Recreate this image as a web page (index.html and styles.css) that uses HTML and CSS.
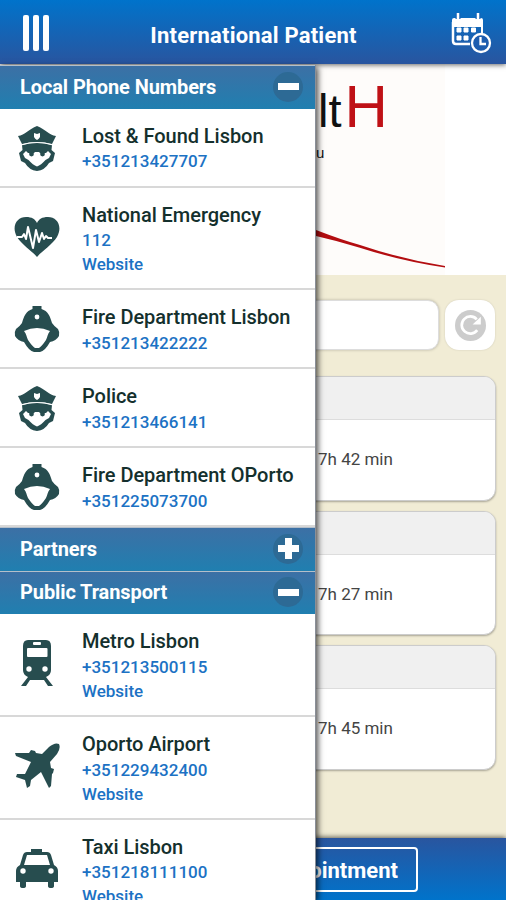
FILE: index.html
```html
<!DOCTYPE html>
<html lang="en">
<head>
    <meta charset="UTF-8">
    <meta name="viewport" content="width=device-width, initial-scale=1.0">
    <title>International Patient</title>
    <link rel="stylesheet" href="styles.css">
</head>
<body>
    <svg class="sprite" width="0" height="0">
        <symbol id="police" viewBox="0 0 46 46">
            <path d="M4 11 C11 10 15 4 23 1 C31 4 35 10 42 11 L38 19 Q23 15 8 19 Z"/>
            <path d="M8 20 Q23 15 38 20 L37.500 25 L41 28 L39 36 L35 38 Q31 45 23 46 Q15 45 11 38 L7 36 L5 28 L8.500 25 Z"/>
            <path class="cut" d="M20 8 L23 9 L26 8 V12 Q25 14 23 15 Q21 14 20 12 Z"/>
            <path class="cut" d="M9 29 L12 26 L14 28 H20 L21 27 H25 L26 28 H32 L34 26 L37 29 L35 33 L31.500 35 Q27 40 23 41.500 Q19 40 14.500 35 L11 33 Z"/>
            <path class="thin" d="M7 20 Q23 15 39 20"/>
            <circle cx="17.500" cy="29" r="2.400"/>
            <circle cx="28.500" cy="29" r="2.400"/>
        </symbol>
        <symbol id="heart" viewBox="0 0 46 46">
            <path d="M23 43 C18 37 8 31 3 23 C-3 12 3 3 12 3 C18 3 21 5 23 9 C25 5 28 3 34 3 C43 3 49 12 43 23 C38 31 28 37 23 43 Z"/>
            <path class="pulse" d="M3 23 H8 L10 20 L12 25 L14 13 L19 34 L22 16 L25 28 L28 19 L30 25 L32 22 L34 24 H38"/>
        </symbol>
        <symbol id="fire" viewBox="0 0 46 46">
            <path d="M18.500 3 V0 H27.500 V3 C34 5 36 10 38 17 Q40 20 44 23 Q46 26 45 30 Q42 35 36 36 Q31 45 26 46 H20 Q15 45 10 36 Q4 35 1 30 Q0 26 2 23 Q6 20 8 17 C10 10 12 5 18.500 3 Z"/>
            <path class="cut" d="M10 25 Q23 19 36 25 C33.500 28 33.500 31 32 34 Q28 40 25 42 H21 Q18 40 14 34 C12.500 31 12.500 28 10 25 Z"/>
            <circle class="cut" cx="23" cy="11" r="2.400"/>
        </symbol>
        <symbol id="train" viewBox="0 0 46 46">
            <path d="M14 0 H32 Q37 0 37 6 V30 Q37 35 32 37 L39 46 H34 L30 40 H16 L12 46 H7 L14 37 Q9 35 9 30 V6 Q9 0 14 0 Z"/>
            <rect class="cut" x="19" y="2" width="8" height="3" rx="1"/>
            <rect class="cut" x="13" y="8" width="20.500" height="9" rx="1"/>
            <circle class="cut" cx="15" cy="29" r="2.700"/>
            <circle class="cut" cx="31" cy="29" r="2.700"/>
        </symbol>
        <symbol id="plane" viewBox="0 0 46 46">
            <path d="M45 1 Q47 5 43 11 L36 19 L37 25 L40 26 L39 30 L38 31 L37 43 L35 45 L27 29 L17 37 L16 43 L13 45 L11 37 L2 34 L3 31 L11 31 L17 19 L2 13 L1 10 L15 10 L17 7 L21 8 L22 10 L28 11 L35 4 Q41 -1 45 1 Z"/>
        </symbol>
        <symbol id="taxi" viewBox="0 0 46 46">
            <path d="M17 6 V3 H28 V6 H33 Q36 6 37 9 L40 19 Q44 21 44 25 V36 H40 V40 Q40 42 37 42 Q34 42 34 40 V36 H12 V40 Q12 42 9 42 Q6 42 6 40 V36 H2 V25 Q2 21 6 19 L9 9 Q10 6 13 6 Z"/>
            <path class="cut" d="M13 9 H33 L36 19 H10 Z"/>
            <circle class="cut" cx="9" cy="25" r="2.700"/>
            <circle class="cut" cx="37" cy="25" r="2.700"/>
        </symbol>
    </svg>

    <div class="app">
        <header class="topbar">
            <div class="burger"><span></span><span></span><span></span></div>
            <h1>International Patient</h1>
            <svg class="calendar" viewBox="0 0 42 42">
                <path d="M3 9 V28 Q3 31 6 31 H20" fill="none" stroke="#fff" stroke-width="2.500"/>
                <path d="M2 14 V7 Q2 5 4 5 H31 Q33 5 33 7 V14 Z" fill="#fff"/>
                <path d="M8 0 V6 M28 0 V6" stroke="#1465b8" stroke-width="5"/>
                <path d="M8 0 V6 M28 0 V6" stroke="#fff" stroke-width="2.500"/>
                <path d="M32 14 V22" stroke="#fff" stroke-width="2"/>
                <path d="M7 15h4v4h-4z M14 15h4v4h-4z M21.500 15h4v4h-4z M7 23h4v4h-4z M14 23h4v4h-4z" fill="#fff" stroke="#fff"/>
                <circle cx="31" cy="30" r="9" fill="#1d5daf" stroke="#fff" stroke-width="2.300"/>
                <path d="M30.500 24 V31 H36" fill="none" stroke="#fff" stroke-width="2.300"/>
            </svg>
        </header>

        <main class="page">
            <div class="banner">
                <div class="logo">
                    <div class="logo-name">lt<b>H</b></div>
                    <div class="logo-sub">u</div>
                    <svg class="swoosh" viewBox="0 0 132 40">
                        <path d="M0 1 Q26 11 44 16 Q85 30 129 37 V38.500 Q85 32 43 18.500 Q22 12 0 7 Z"/>
                    </svg>
                </div>
            </div>
            <div class="search">
                <div class="search-box"></div>
                <button class="refresh">
                    <svg viewBox="0 0 30 30">
                        <circle cx="15" cy="15" r="15" fill="#ccc"/>
                        <path d="M21.500 19.500 A8.300 8.300 0 1 1 21 9" fill="none" stroke="#fff" stroke-width="2.600"/>
                        <path d="M25 6.500 V14 H17 Z" fill="#fff"/>
                    </svg>
                </button>
            </div>
            <div class="cards">
                <div class="card"><div class="card-head"></div><div class="card-body">7h 42 min</div></div>
                <div class="card"><div class="card-head"></div><div class="card-body">7h 27 min</div></div>
                <div class="card"><div class="card-head"></div><div class="card-body">7h 45 min</div></div>
            </div>
        </main>

        <footer class="bottombar">
            <button class="appointment">Appointment</button>
        </footer>

        <nav class="drawer">
            <h2>Local Phone Numbers <span class="toggle"></span></h2>
            <div class="item">
                <svg class="icon"><use href="#police"/></svg>
                <div><h3>Lost &amp; Found Lisbon</h3><a>+351213427707</a></div>
            </div>
            <div class="item tall">
                <svg class="icon"><use href="#heart"/></svg>
                <div><h3>National Emergency</h3><a>112</a><a>Website</a></div>
            </div>
            <div class="item">
                <svg class="icon"><use href="#fire"/></svg>
                <div><h3>Fire Department Lisbon</h3><a>+351213422222</a></div>
            </div>
            <div class="item">
                <svg class="icon"><use href="#police"/></svg>
                <div><h3>Police</h3><a>+351213466141</a></div>
            </div>
            <div class="item">
                <svg class="icon"><use href="#fire"/></svg>
                <div><h3>Fire Department OPorto</h3><a>+351225073700</a></div>
            </div>
            <h2>Partners <span class="toggle plus"></span></h2>
            <h2>Public Transport <span class="toggle"></span></h2>
            <div class="item tall">
                <svg class="icon"><use href="#train"/></svg>
                <div><h3>Metro Lisbon</h3><a>+351213500115</a><a>Website</a></div>
            </div>
            <div class="item tall">
                <svg class="icon"><use href="#plane"/></svg>
                <div><h3>Oporto Airport</h3><a>+351229432400</a><a>Website</a></div>
            </div>
            <div class="item tall">
                <svg class="icon"><use href="#taxi"/></svg>
                <div><h3>Taxi Lisbon</h3><a>+351218111100</a><a>Website</a></div>
            </div>
        </nav>
    </div>
</body>
</html>
```
FILE: styles.css
```css
:root {
    --blue-light: #0073cb;
    --blue-dark: #29559f;
    --icon: #274d4f;
    --link: #1c72c4;
    --sand: #f1ecd5;
}

* {
    box-sizing: border-box;
}

body {
    margin: 0;
    font-family: Roboto, sans-serif;
}

h1, h2, h3 {
    margin: 0;
}

.sprite {
    position: absolute;
}

.app {
    position: relative;
    display: flex;
    flex-direction: column;
    width: 506px;
    height: 900px;
    overflow: hidden;
    background: var(--sand);
}

/* Top bar */
.topbar {
    z-index: 1;
    flex: none;
    display: grid;
    grid-template-columns: 60px 1fr 60px;
    align-items: center;
    height: 64px;
    background: linear-gradient(var(--blue-light), var(--blue-dark));
    box-shadow: 0 1px 5px rgba(0, 0, 0, 0.6);
}

.topbar h1 {
    padding: 7px 0 0 1px;
    color: #fff;
    font-size: 22px;
    line-height: 26px;
    font-weight: 700;
    letter-spacing: 0.2px;
    text-align: center;
}

.burger {
    display: flex;
    gap: 4px;
    padding: 2px 0 0 23px;
}

.burger span {
    width: 6px;
    height: 36px;
    border-radius: 2px;
    background: #fff;
}

.calendar {
    width: 42px;
    height: 42px;
    margin: 4px 0 0 4px;
}

/* Page under the drawer */
.page {
    flex: 1;
    display: flex;
    flex-direction: column;
}

.banner {
    height: 211px;
    background: #fff;
}

.logo {
    width: 445px;
    height: 211px;
    padding-left: 316px;
    background: #fefcfa;
    font-family: "Liberation Sans", sans-serif;
    color: #111;
}

.logo-name {
    padding: 9px 0 0 2px;
    font-size: 47px;
    line-height: 68px;
    white-space: nowrap;
}

.logo-name b {
    margin-left: 3px;
    color: #bf1116;
    font-size: 60px;
    font-weight: 400;
}

.logo-sub {
    font-size: 15px;
    line-height: 16px;
}

.swoosh {
    display: block;
    width: 132px;
    height: 40px;
    margin-top: 68px;
    fill: #b30d10;
}

.search {
    display: flex;
    gap: 6px;
    padding: 25px 11px 0 12px;
}

.search-box {
    flex: 1;
    height: 50px;
    border: 1px solid #ddd;
    border-radius: 11px;
    background: #fff;
    box-shadow: 0 0 3px rgba(0, 0, 0, 0.25);
}

.refresh {
    display: flex;
    justify-content: center;
    align-items: center;
    width: 50px;
    height: 50px;
    padding: 0;
    border: none;
    border-radius: 14px;
    background: #fff;
    box-shadow: 0 0 2px rgba(0, 0, 0, 0.15);
}

.refresh svg {
    width: 31px;
    height: 31px;
}

.cards {
    display: flex;
    flex-direction: column;
    gap: 10px;
    padding: 26px 10px 0 12px;
}

.card {
    height: 124.5px;
    border: 1px solid #ccc;
    border-radius: 12px;
    background: #fff;
    box-shadow: 0 1px 2px rgba(0, 0, 0, 0.3);
    overflow: hidden;
}

.card-head {
    height: 43px;
    border-bottom: 1px solid #ddd;
    background: #f0f0f0;
}

.card-body {
    padding: 29px 0 0 305px;
    color: #444;
    font-size: 17px;
    line-height: 20px;
}

.bottombar {
    flex: none;
    height: 62px;
    padding: 9px 0 0 87px;
    background: linear-gradient(var(--blue-dark), var(--blue-light));
    box-shadow: 0 -1px 5px rgba(0, 0, 0, 0.6);
}

.appointment {
    width: 331px;
    height: 45px;
    padding: 2px 18px 0 0;
    border: 2px solid #fff;
    border-radius: 4px;
    background: none;
    color: #fff;
    font: 700 22px Roboto, sans-serif;
    text-align: right;
}

/* Drawer */
.drawer {
    position: absolute;
    z-index: 2;
    top: 65px;
    left: 0;
    width: 316px;
    height: 835px;
    overflow: hidden;
    border-right: 1px solid #8a8f98;
    background: #fff;
    box-shadow: 2px 2px 6px rgba(0, 0, 0, 0.7);
}

.drawer h2 {
    display: flex;
    justify-content: space-between;
    align-items: center;
    height: 43.5px;
    padding: 0 12px 1px 20px;
    border-top: 1px solid #b4bfca;
    background: linear-gradient(#3c70a5, #207fb0);
    color: #fff;
    font-size: 20px;
    font-weight: 700;
    letter-spacing: -0.1px;
}

.toggle {
    display: grid;
    place-items: center;
    width: 30px;
    height: 30px;
    border-radius: 50%;
    background: #2d6a95;
}

.toggle::before,
.toggle.plus::after {
    content: "";
    grid-area: 1 / 1;
    width: 21px;
    height: 7px;
    background: #fff;
}

.toggle.plus::after {
    transform: rotate(90deg);
}

.item {
    display: flex;
    gap: 22px;
    height: 79px;
    padding: 14.3px 0 0 14px;
    border-bottom: 2px solid #d8d8d8;
}

.item.tall {
    height: 102.7px;
}

.icon {
    flex: none;
    width: 46px;
    height: 46px;
    margin-top: 2px;
    fill: var(--icon);
}

.item.tall .icon {
    margin-top: 12px;
}

.cut {
    fill: #fff;
}

.thin {
    fill: none;
    stroke: #fff;
    stroke-width: 1;
}

.pulse {
    fill: none;
    stroke: #fff;
    stroke-width: 2;
    stroke-linejoin: round;
}

.item h3 {
    color: #14302d;
    font-size: 20px;
    line-height: 26.4px;
    font-weight: 500;
    letter-spacing: -0.05px;
    white-space: nowrap;
}

.item a {
    display: block;
    color: var(--link);
    font-size: 17px;
    line-height: 24px;
    font-weight: 500;
}
```
